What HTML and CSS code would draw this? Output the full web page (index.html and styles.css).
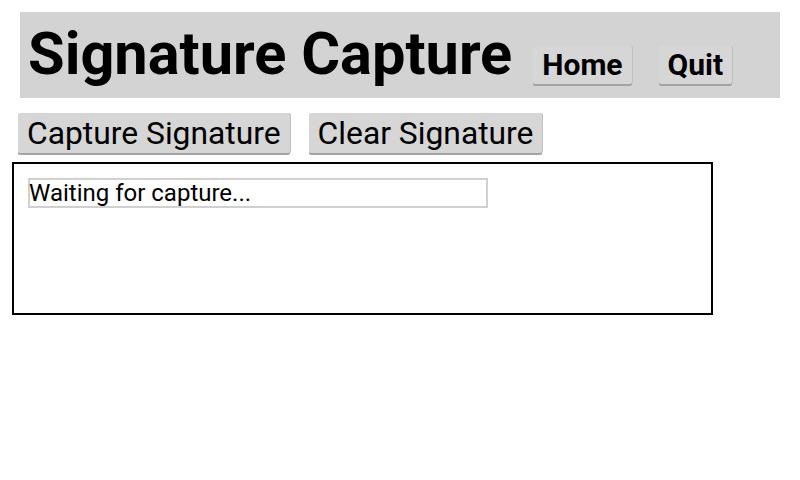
FILE: index.html
```html
<!DOCTYPE html>
<html>
<head>
<meta charset="utf-8">
<link rel="stylesheet" href="styles.css">
</head>
<body>
<div class="header">
  <h1 class="title">Signature Capture</h1>
  <button class="btn btn-nav">Home</button>
  <button class="btn btn-nav">Quit</button>
</div>
<div class="actions">
  <button class="btn btn-action">Capture Signature</button>
  <button class="btn btn-action">Clear Signature</button>
</div>
<div class="capture-box">
  <div class="status">Waiting for capture...</div>
</div>
</body>
</html>
```
FILE: styles.css
```css
html, body {
  margin: 0;
  padding: 0;
  background: #fff;
}
body {
  padding: 12px;
  font-family: Roboto, "Liberation Sans", sans-serif;
  color: #000;
}
.header {
  margin-left: 8px;
  width: 760px;
  height: 86px;
  background: #d3d3d3;
  display: flex;
  align-items: center;
  box-sizing: border-box;
  padding-left: 8px;
}
.title {
  margin: 0;
  font-size: 59.5px;
  font-weight: 700;
  line-height: 1;
}
.btn {
  font-family: Roboto, "Liberation Sans", sans-serif;
  background: #d6d6d6;
  border: none;
  border-radius: 2px;
  box-shadow: 0 2px 0 #a3a3a3, 1px 0 0 #c0c0c0;
  color: #000;
  padding: 0;
  margin: 0;
}
.btn-nav {
  font-size: 30px;
  font-weight: 700;
  height: 38px;
  padding: 0 9px;
  margin-top: 19px;
}
.title + .btn-nav {
  margin-left: 21px;
}
.btn-nav + .btn-nav {
  margin-left: 27px;
}
.actions {
  display: flex;
  gap: 19px;
  margin-top: 15px;
  margin-left: 6px;
}
.btn-action {
  font-size: 31.8px;
  font-weight: 400;
  height: 40px;
  padding: 0 9px;
}
.capture-box {
  margin-top: 9px;
  width: 701px;
  height: 153px;
  box-sizing: border-box;
  border: 2px solid #000;
  padding: 14px 0 0 14px;
}
.status {
  width: 460px;
  height: 30px;
  box-sizing: border-box;
  border: 2px solid #d0d0d0;
  font-size: 24px;
  line-height: 26px;
  text-indent: -1px;
  white-space: nowrap;
}
```
